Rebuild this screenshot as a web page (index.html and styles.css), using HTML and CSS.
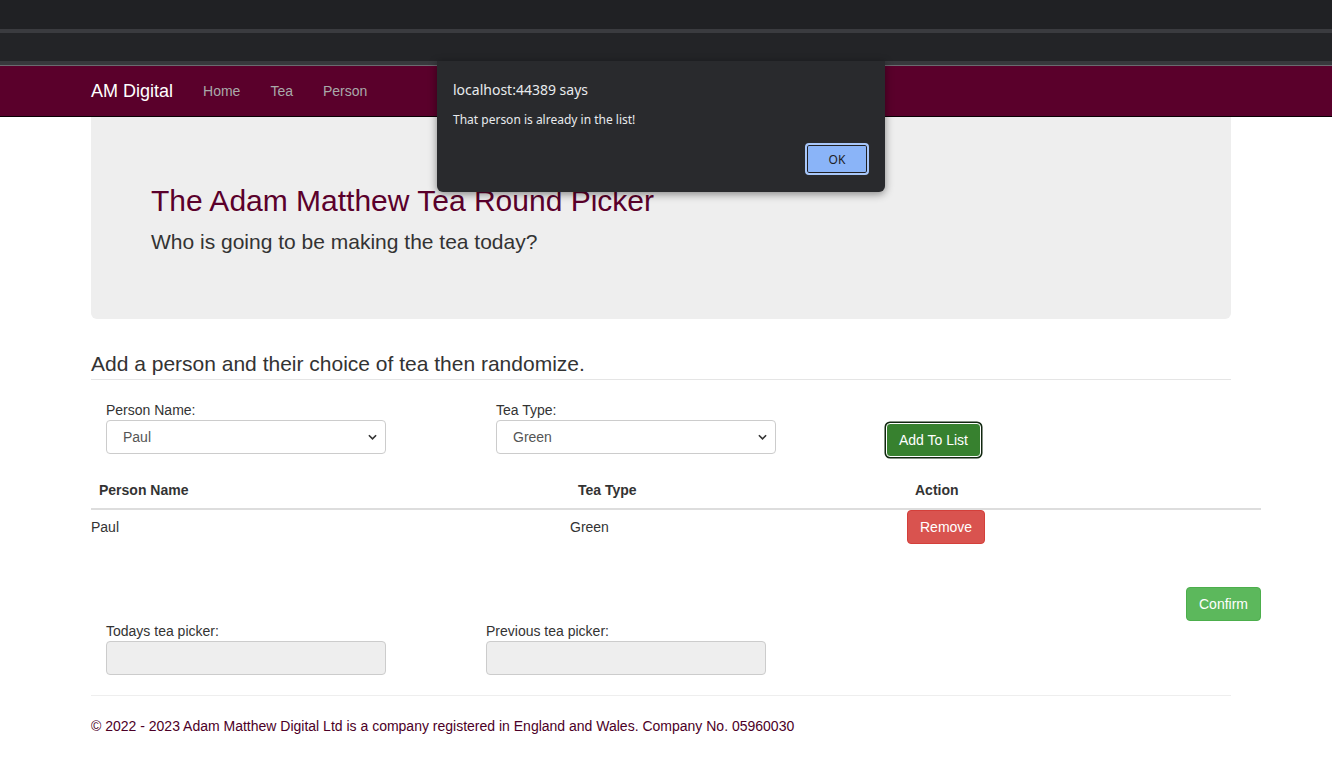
FILE: index.html
```html
<!DOCTYPE html>
<html lang="en">
<head>
<meta charset="utf-8">
<title>Tea Round Picker</title>
<link rel="stylesheet" href="styles.css">
</head>
<body>
<div class="chrome">
  <div class="chrome-tabs"></div>
  <div class="chrome-sep"></div>
  <div class="chrome-bar"></div>
  <div class="chrome-bottom"></div>
</div>
<nav class="navbar">
  <div class="nav-inner">
    <a class="brand">AM Digital</a>
    <a class="nav-link">Home</a>
    <a class="nav-link">Tea</a>
    <a class="nav-link">Person</a>
  </div>
</nav>
<main class="container">
  <section class="jumbotron">
    <h1 class="jumbo-title">The Adam Matthew Tea Round Picker</h1>
    <p class="jumbo-sub">Who is going to be making the tea today?</p>
  </section>

  <h3 class="section-title">Add a person and their choice of tea then randomize.</h3>
  <hr class="rule">

  <div class="form-row">
    <div class="col col-390">
      <label class="lbl">Person Name:</label>
      <div class="select"><span>Paul</span><svg class="chev" viewBox="0 0 10 6" width="9" height="6"><path d="M1 1l4 4 4-4" fill="none" stroke="#333" stroke-width="1.8"/></svg></div>
    </div>
    <div class="col col-390">
      <label class="lbl">Tea Type:</label>
      <div class="select"><span>Green</span><svg class="chev" viewBox="0 0 10 6" width="9" height="6"><path d="M1 1l4 4 4-4" fill="none" stroke="#333" stroke-width="1.8"/></svg></div>
    </div>
    <div class="col col-btn">
      <button class="btn btn-add">Add To List</button>
    </div>
  </div>

  <table class="table">
    <thead>
      <tr><th class="c1">Person Name</th><th class="c2">Tea Type</th><th class="c3">Action</th></tr>
    </thead>
    <tbody>
      <tr><td>Paul</td><td>Green</td><td><button class="btn btn-remove">Remove</button></td></tr>
    </tbody>
  </table>

  <div class="confirm-row">
    <button class="btn btn-confirm">Confirm</button>
  </div>

  <div class="picker-row">
    <div class="col col-380">
      <label class="lbl">Todays tea picker:</label>
      <div class="input-disabled"></div>
    </div>
    <div class="col col-380">
      <label class="lbl">Previous tea picker:</label>
      <div class="input-disabled"></div>
    </div>
  </div>

  <hr class="rule footer-rule">
  <footer class="footer">© 2022 - 2023 Adam Matthew Digital Ltd is a company registered in England and Wales. Company No. 05960030</footer>
</main>

<div class="dialog">
  <div class="dialog-title">localhost:44389 says</div>
  <div class="dialog-msg">That person is already in the list!</div>
  <div class="dialog-actions"><button class="dialog-ok">OK</button></div>
</div>
</body>
</html>
```

FILE: styles.css
```css
* { box-sizing: border-box; }
html, body { margin: 0; padding: 0; background: #fff; }
body {
  font-family: "Liberation Sans", Arial, sans-serif;
  font-size: 14px;
  line-height: 20px;
  color: #333;
  width: 1332px;
  height: 776px;
  overflow: hidden;
  position: relative;
}

/* browser chrome */
.chrome-tabs { height: 29px; background: #202124; }
.chrome-sep { height: 4px; background: #3a3b3f; }
.chrome-bar { height: 28px; background: #232427; }
.chrome-bottom { height: 5px; background: #38393d; border-bottom: 1px solid #6b6b70; }

/* navbar */
.navbar {
  height: 51px;
  background: #5a002b;
  border-bottom: 1px solid #0a0005;
}
.nav-inner {
  width: 1170px;
  margin-left: 76px;
  padding: 0 15px;
  display: flex;
  align-items: center;
  height: 50px;
}
.brand {
  color: #fff;
  font-size: 18px;
  line-height: 20px;
  padding-right: 15px;
}
.nav-link {
  color: #a9a9a9;
  font-size: 14px;
  padding: 0 15px;
}

/* container */
.container {
  width: 1200px;
  margin-left: 76px;
  padding: 0 15px;
}

.jumbotron {
  width: 1140px;
  height: 202px;
  background: #eee;
  border-radius: 0 0 6px 6px;
  padding: 67px 60px 0;
}
.jumbo-title {
  margin: 0;
  font-weight: 400;
  font-size: 30px;
  line-height: 33px;
  color: #5a002b;
}
.jumbo-sub {
  margin: 11px 0 0;
  font-size: 21px;
  line-height: 28px;
  color: #333;
}

.section-title {
  margin: 31px 0 0;
  font-size: 21px;
  line-height: 28px;
  font-weight: 400;
  color: #333;
}
.rule {
  width: 1140px;
  margin: 1px 0 0;
  border: 0;
  border-top: 1px solid #e5e5e5;
  height: 0;
}

.form-row {
  display: flex;
  margin-top: 20px;
}
.col { padding: 0 15px; }
.col-390 { width: 390px; }
.col-380 { width: 380px; }
.col-btn { padding-top: 23px; }
.lbl { display: block; height: 20px; color: #333; }
.select {
  width: 280px;
  height: 34px;
  border: 1px solid #ccc;
  border-radius: 4px;
  background: #fff;
  display: flex;
  align-items: center;
  justify-content: space-between;
  padding: 0 8px 0 16px;
  color: #555;
}
.chev { display: block; }

.btn {
  font-family: "Liberation Sans", Arial, sans-serif;
  font-size: 14px;
  line-height: 20px;
  color: #fff;
  border-radius: 4px;
  height: 34px;
  padding: 0 12px;
  cursor: pointer;
}
.btn-add {
  width: 95px;
  background: #37812f;
  border: 1px solid #fff;
  box-shadow: 0 0 0 1.5px #10260f;
  padding: 0;
}
.btn-remove {
  width: 78px;
  background: #d9534f;
  border: 1px solid #d43f3a;
}
.btn-confirm {
  width: 75px;
  background: #5cb85c;
  border: 1px solid #4cae4c;
}

.table {
  width: 1170px;
  border-collapse: collapse;
  margin-top: 15px;
}
.table th {
  text-align: left;
  font-weight: 700;
  padding: 8px;
  height: 36px;
  border-bottom: 2px solid #ddd;
  color: #333;
}
.table .c1 { width: 479px; }
.table .c2 { width: 337px; }
.table td {
  padding: 0;
  height: 34px;
  vertical-align: middle;
  color: #333;
}
.table td .btn { display: block; }

.confirm-row {
  display: flex;
  justify-content: flex-end;
  width: 1170px;
  margin-top: 43px;
}

.picker-row {
  display: flex;
}
.input-disabled {
  width: 280px;
  height: 34px;
  background: #eee;
  border: 1px solid #ccc;
  border-radius: 4px;
}

.footer-rule { margin-top: 20px; border-top-color: #eee; }
.footer {
  margin-top: 20px;
  color: #4c0027;
  line-height: 20px;
}

/* alert dialog */
.dialog {
  position: absolute;
  left: 437px;
  top: 61px;
  width: 448px;
  height: 131px;
  background: #292a2d;
  border-radius: 0 0 6px 6px;
  box-shadow: 0 2px 8px rgba(0, 0, 0, 0.45);
  font-family: "Noto Sans", "Open Sans", sans-serif;
  color: #e8eaed;
  padding: 18px 16px 0;
}
.dialog-title { font-size: 14px; line-height: 22px; }
.dialog-msg { font-size: 12px; line-height: 18px; margin-top: 10px; }
.dialog-actions {
  display: flex;
  justify-content: flex-end;
  margin-top: 14px;
}
.dialog-ok {
  width: 64px;
  height: 32px;
  padding: 0;
  background: #8ab4f8;
  border: 2px solid #a8c7fa;
  box-shadow: inset 0 0 0 1px #202124;
  border-radius: 4px;
  color: #202124;
  font-family: "Noto Sans", "Open Sans", sans-serif;
  font-size: 12px;
}
```
